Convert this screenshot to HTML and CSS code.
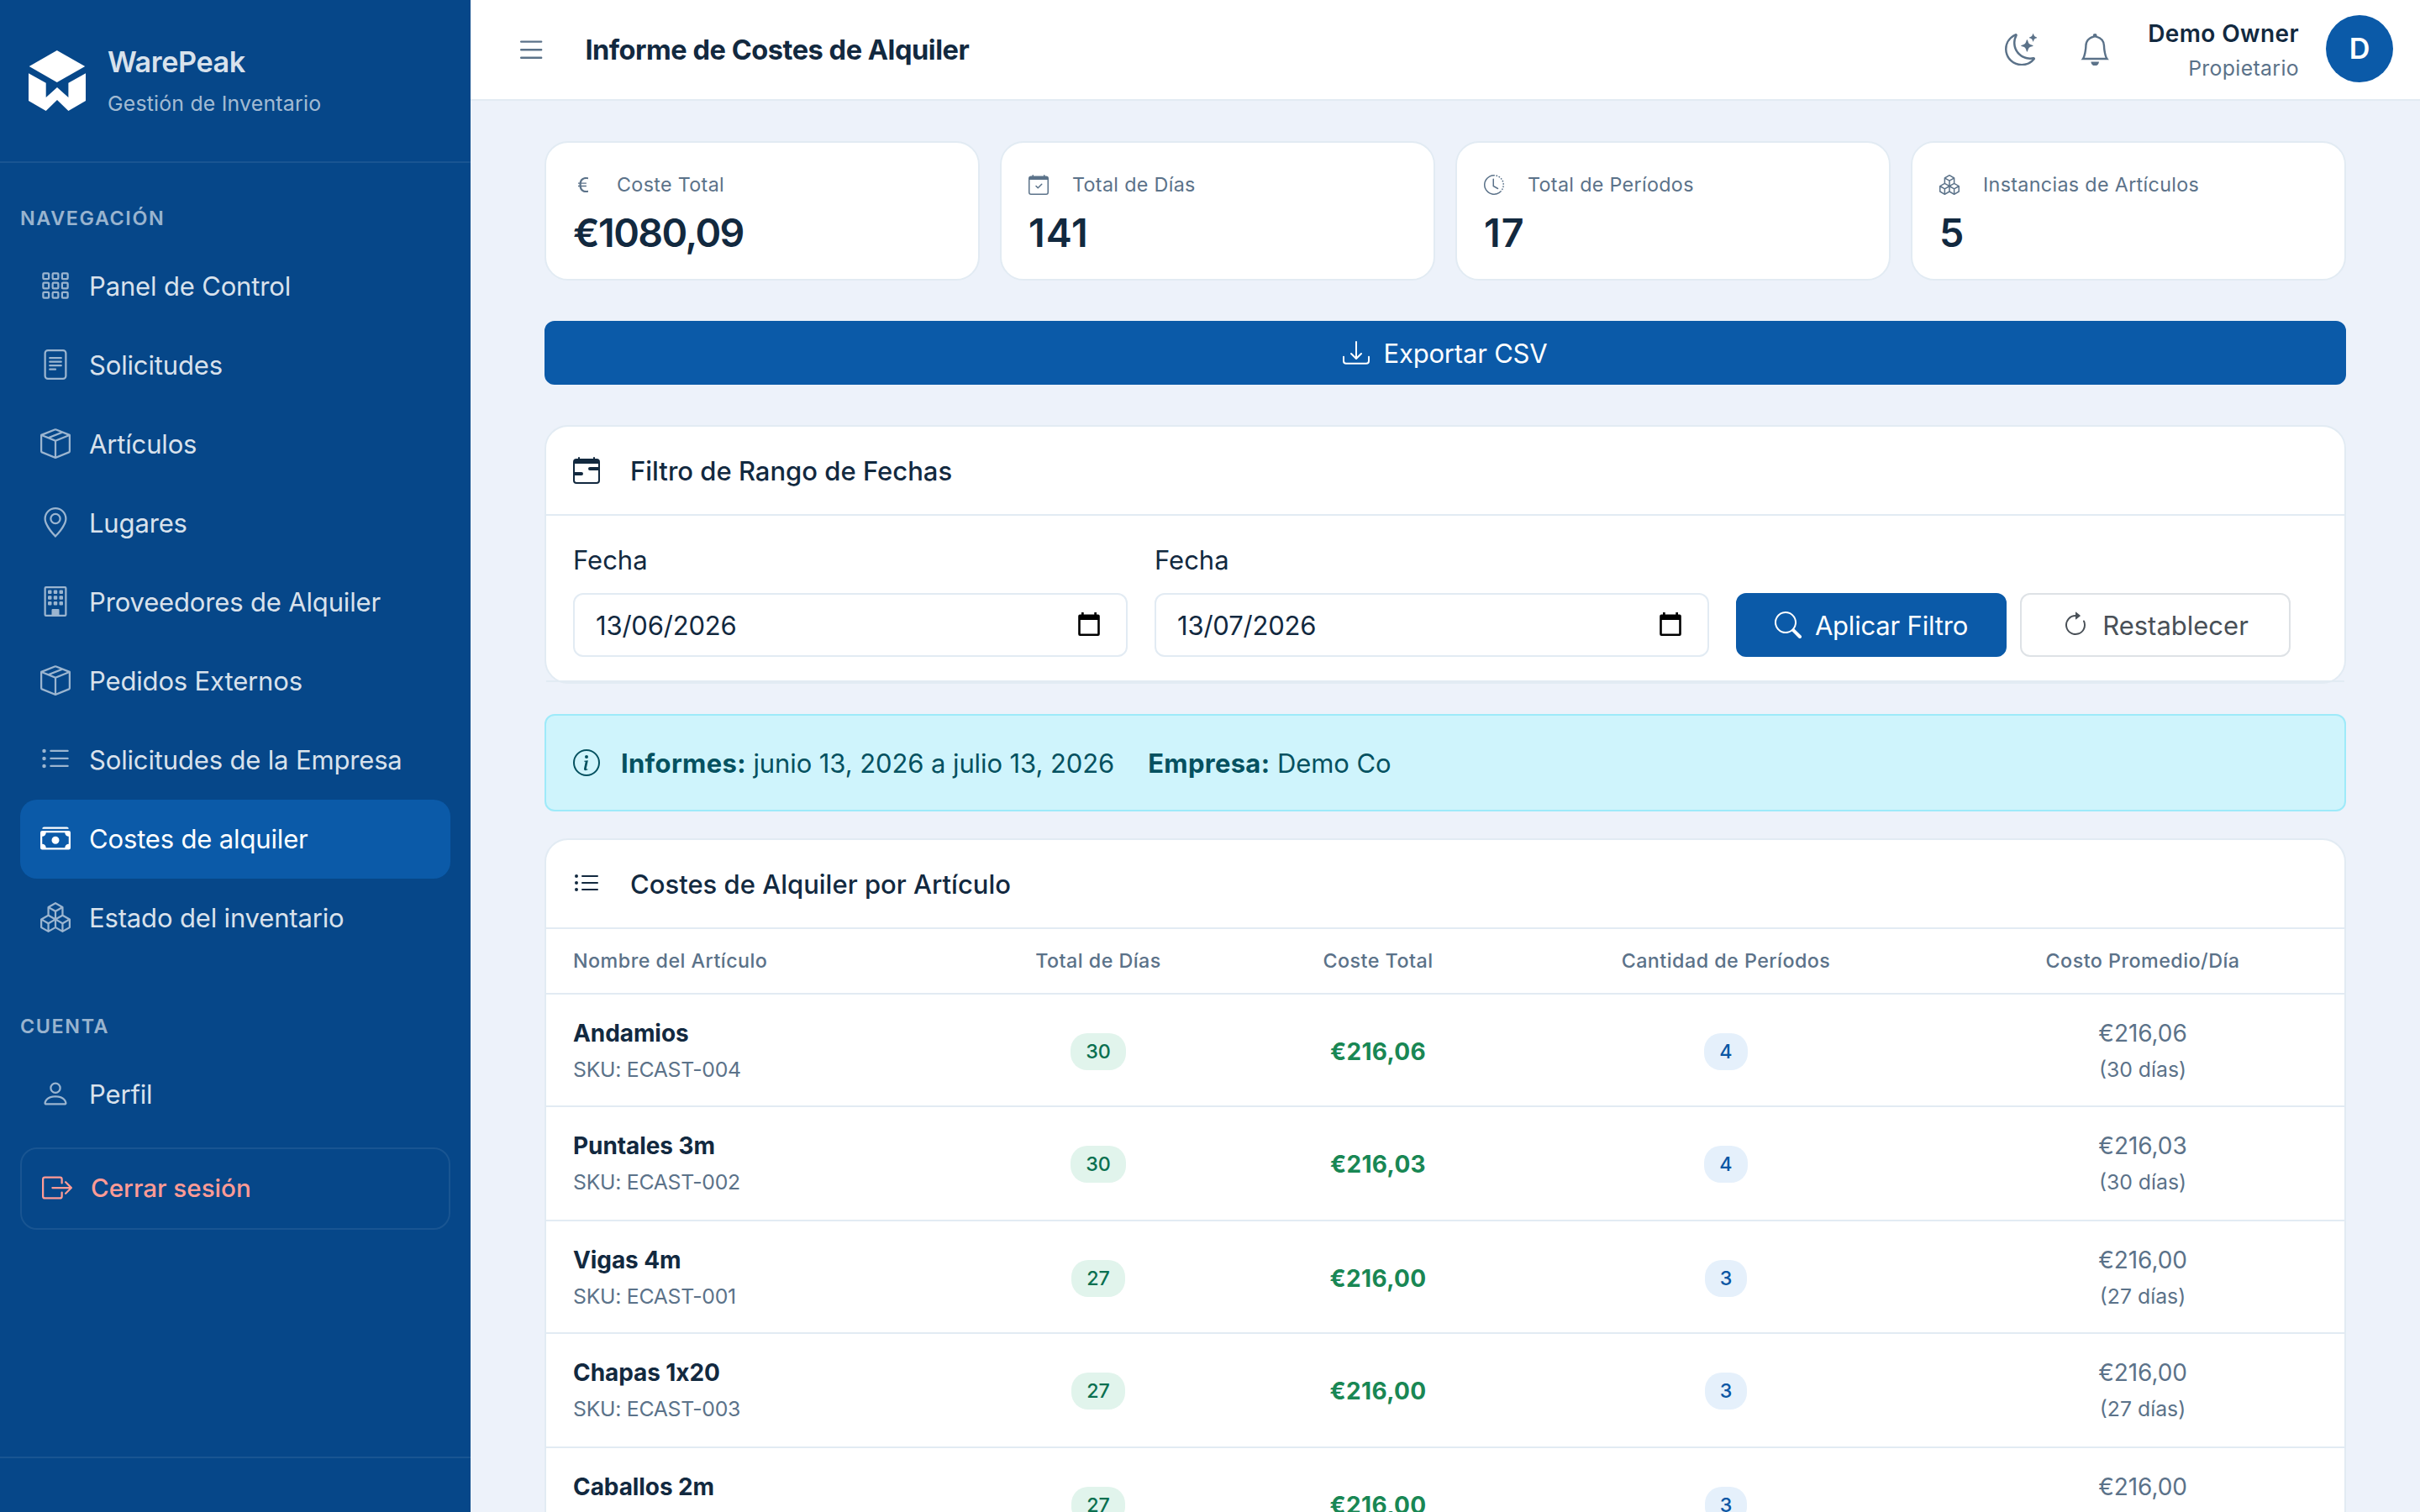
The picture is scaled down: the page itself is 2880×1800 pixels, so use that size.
FILE: index.html
```html
<!DOCTYPE html>
<html lang="es">
<head>
    <meta charset="utf-8">
    <title>Informe de Costes de Alquiler - WarePeak</title>
    <meta name="viewport" content="width=device-width, initial-scale=1.0">
    <link rel="stylesheet" href="styles.css">
</head>
<body>

<!-- Icon sprite -->
<svg class="sprite" aria-hidden="true">
    <symbol id="i-grid" viewBox="0 0 16 16">
        <g fill="none" stroke="currentColor">
            <rect x="1.5" y="1.5" width="3" height="3" rx=".5"/><rect x="6.5" y="1.5" width="3" height="3" rx=".5"/><rect x="11.5" y="1.5" width="3" height="3" rx=".5"/>
            <rect x="1.5" y="6.5" width="3" height="3" rx=".5"/><rect x="6.5" y="6.5" width="3" height="3" rx=".5"/><rect x="11.5" y="6.5" width="3" height="3" rx=".5"/>
            <rect x="1.5" y="11.5" width="3" height="3" rx=".5"/><rect x="6.5" y="11.5" width="3" height="3" rx=".5"/><rect x="11.5" y="11.5" width="3" height="3" rx=".5"/>
        </g>
    </symbol>
    <symbol id="i-file" viewBox="0 0 16 16">
        <path d="M5 4a.5.5 0 0 0 0 1h6a.5.5 0 0 0 0-1zm-.5 2.5A.5.5 0 0 1 5 6h6a.5.5 0 0 1 0 1H5a.5.5 0 0 1-.5-.5M5 8a.5.5 0 0 0 0 1h6a.5.5 0 0 0 0-1zm0 2a.5.5 0 0 0 0 1h3a.5.5 0 0 0 0-1z"/>
        <path d="M2 2a2 2 0 0 1 2-2h8a2 2 0 0 1 2 2v12a2 2 0 0 1-2 2H4a2 2 0 0 1-2-2zm10-1H4a1 1 0 0 0-1 1v12a1 1 0 0 0 1 1h8a1 1 0 0 0 1-1V2a1 1 0 0 0-1-1"/>
    </symbol>
    <symbol id="i-box" viewBox="0 0 16 16">
        <path d="M8.186 1.113a.5.5 0 0 0-.372 0L1.846 3.5l2.404.961L10.404 2zm3.564 1.426L5.596 5 8 5.961 14.154 3.5zm3.25 1.7-6.5 2.6v7.922l6.5-2.6V4.24zM7.5 14.762V6.838L1 4.239v7.923zM7.443.184a1.5 1.5 0 0 1 1.114 0l7.129 2.852A.5.5 0 0 1 16 3.5v8.662a1 1 0 0 1-.629.928l-7.185 2.874a.5.5 0 0 1-.372 0L.63 13.09a1 1 0 0 1-.63-.928V3.5a.5.5 0 0 1 .314-.464z"/>
    </symbol>
    <symbol id="i-geo" viewBox="0 0 16 16">
        <path d="M12.166 8.94c-.524 1.062-1.234 2.12-1.96 3.07A32 32 0 0 1 8 14.58a32 32 0 0 1-2.206-2.57c-.726-.95-1.436-2.008-1.96-3.07C3.304 7.867 3 6.862 3 6a5 5 0 0 1 10 0c0 .862-.305 1.867-.834 2.94M8 16s6-5.686 6-10A6 6 0 0 0 2 6c0 4.314 6 10 6 10"/>
        <path d="M8 8a2 2 0 1 1 0-4 2 2 0 0 1 0 4m0 1a3 3 0 1 0 0-6 3 3 0 0 0 0 6"/>
    </symbol>
    <symbol id="i-building" viewBox="0 0 16 16">
        <rect x="4" y="2" width="2" height="2" rx=".5"/><rect x="7" y="2" width="2" height="2" rx=".5"/><rect x="10" y="2" width="2" height="2" rx=".5"/>
        <rect x="4" y="5" width="2" height="2" rx=".5"/><rect x="7" y="5" width="2" height="2" rx=".5"/><rect x="10" y="5" width="2" height="2" rx=".5"/>
        <rect x="4" y="8" width="2" height="2" rx=".5"/><rect x="7" y="8" width="2" height="2" rx=".5"/><rect x="10" y="8" width="2" height="2" rx=".5"/>
        <path d="M2 1a1 1 0 0 1 1-1h10a1 1 0 0 1 1 1v14a1 1 0 0 1-1 1H3a1 1 0 0 1-1-1zm11 0H3v14h3v-2.5a.5.5 0 0 1 .5-.5h3a.5.5 0 0 1 .5.5V15h3z"/>
    </symbol>
    <symbol id="i-list-ul" viewBox="0 0 16 16">
        <path d="M5 11.5a.5.5 0 0 1 .5-.5h9a.5.5 0 0 1 0 1h-9a.5.5 0 0 1-.5-.5m0-4a.5.5 0 0 1 .5-.5h9a.5.5 0 0 1 0 1h-9a.5.5 0 0 1-.5-.5m0-4a.5.5 0 0 1 .5-.5h9a.5.5 0 0 1 0 1h-9a.5.5 0 0 1-.5-.5m-3 1a1 1 0 1 0 0-2 1 1 0 0 0 0 2m0 4a1 1 0 1 0 0-2 1 1 0 0 0 0 2m0 4a1 1 0 1 0 0-2 1 1 0 0 0 0 2"/>
    </symbol>
    <symbol id="i-cash" viewBox="0 0 16 16">
        <path d="M1 3a1 1 0 0 1 1-1h12a1 1 0 0 1 1 1zm7 8a2 2 0 1 0 0-4 2 2 0 0 0 0 4"/>
        <path d="M0 5a1 1 0 0 1 1-1h14a1 1 0 0 1 1 1v8a1 1 0 0 1-1 1H1a1 1 0 0 1-1-1zm3 0a2 2 0 0 1-2 2v4a2 2 0 0 1 2 2h10a2 2 0 0 1 2-2V7a2 2 0 0 1-2-2z"/>
    </symbol>
    <symbol id="i-boxes" viewBox="0 0 16 16">
        <path d="M7.752.066a.5.5 0 0 1 .496 0l3.75 2.143a.5.5 0 0 1 .252.434v3.995l3.498 2A.5.5 0 0 1 16 9.07v4.286a.5.5 0 0 1-.252.434l-3.75 2.143a.5.5 0 0 1-.496 0l-3.502-2-3.502 2.001a.5.5 0 0 1-.496 0l-3.75-2.143A.5.5 0 0 1 0 13.357V9.071a.5.5 0 0 1 .252-.434L3.75 6.638V2.643a.5.5 0 0 1 .252-.434zM4.25 7.504 1.508 9.071l2.742 1.567 2.742-1.567zM7.5 9.933l-2.75 1.571v3.134l2.75-1.571zm1 3.134 2.75 1.571v-3.134L8.5 9.933zm.508-3.996 2.742 1.567 2.742-1.567-2.742-1.567zm2.242-2.433V3.504L8.5 5.076V8.21zM7.5 8.21V5.076L4.75 3.504v3.134zM5.258 2.643 8 4.21l2.742-1.567L8 1.076zM15 9.933l-2.75 1.571v3.134L15 13.067zM3.75 14.638v-3.134L1 9.933v3.134z"/>
    </symbol>
    <symbol id="i-person" viewBox="0 0 16 16">
        <path d="M8 8a3 3 0 1 0 0-6 3 3 0 0 0 0 6m2-3a2 2 0 1 1-4 0 2 2 0 0 1 4 0m4 8c0 1-1 1-1 1H3s-1 0-1-1 1-4 6-4 6 3 6 4m-1-.004c-.001-.246-.154-.986-.832-1.664C11.516 10.68 10.289 10 8 10s-3.516.68-4.168 1.332c-.678.678-.83 1.418-.832 1.664z"/>
    </symbol>
    <symbol id="i-logout" viewBox="0 0 16 16">
        <path d="M10 12.5a.5.5 0 0 1-.5.5h-8a.5.5 0 0 1-.5-.5v-9a.5.5 0 0 1 .5-.5h8a.5.5 0 0 1 .5.5v2a.5.5 0 0 0 1 0v-2A1.5 1.5 0 0 0 9.5 2h-8A1.5 1.5 0 0 0 0 3.5v9A1.5 1.5 0 0 0 1.5 14h8a1.5 1.5 0 0 0 1.5-1.5v-2a.5.5 0 0 0-1 0z"/>
        <path d="M15.854 8.354a.5.5 0 0 0 0-.708l-3-3a.5.5 0 0 0-.708.708L14.293 7.5H5.5a.5.5 0 0 0 0 1h8.793l-2.147 2.146a.5.5 0 0 0 .708.708z"/>
    </symbol>
    <symbol id="i-menu" viewBox="0 0 16 16">
        <path d="M2.5 12a.5.5 0 0 1 .5-.5h10a.5.5 0 0 1 0 1H3a.5.5 0 0 1-.5-.5m0-4a.5.5 0 0 1 .5-.5h10a.5.5 0 0 1 0 1H3a.5.5 0 0 1-.5-.5m0-4a.5.5 0 0 1 .5-.5h10a.5.5 0 0 1 0 1H3a.5.5 0 0 1-.5-.5"/>
    </symbol>
    <symbol id="i-moon" viewBox="0 0 16 16">
        <path d="M6 .278a.77.77 0 0 1 .08.858 7.2 7.2 0 0 0-.878 3.46c0 4.021 3.278 7.277 7.318 7.277q.792-.001 1.533-.16a.79.79 0 0 1 .81.316.73.73 0 0 1-.031.893A8.35 8.35 0 0 1 8.344 16C3.734 16 0 12.286 0 7.71 0 4.266 2.114 1.312 5.124.06A.75.75 0 0 1 6 .278M4.858 1.311A7.27 7.27 0 0 0 1.025 7.71c0 4.02 3.279 7.276 7.319 7.276a7.32 7.32 0 0 0 5.205-2.162q-.506.063-1.029.063c-4.61 0-8.343-3.714-8.343-8.29 0-1.167.242-2.278.681-3.286"/>
        <path d="M10.794 3.148a.217.217 0 0 1 .412 0l.387 1.162c.173.518.579.924 1.097 1.097l1.162.387a.217.217 0 0 1 0 .412l-1.162.387a1.73 1.73 0 0 0-1.097 1.097l-.387 1.162a.217.217 0 0 1-.412 0l-.387-1.162A1.73 1.73 0 0 0 9.31 6.593l-1.162-.387a.217.217 0 0 1 0-.412l1.162-.387a1.73 1.73 0 0 0 1.097-1.097zM13.863.099a.145.145 0 0 1 .274 0l.258.774c.115.346.386.617.732.732l.774.258a.145.145 0 0 1 0 .274l-.774.258a1.16 1.16 0 0 0-.732.732l-.258.774a.145.145 0 0 1-.274 0l-.258-.774a1.16 1.16 0 0 0-.732-.732l-.774-.258a.145.145 0 0 1 0-.274l.774-.258c.346-.115.617-.386.732-.732z"/>
    </symbol>
    <symbol id="i-bell" viewBox="0 0 16 16">
        <path d="M8 16a2 2 0 0 0 2-2H6a2 2 0 0 0 2 2M8 1.918l-.797.161A4 4 0 0 0 4 6c0 .628-.134 2.197-.459 3.742-.16.767-.376 1.566-.663 2.258h10.244c-.287-.692-.502-1.49-.663-2.258C12.134 8.197 12 6.628 12 6a4 4 0 0 0-3.203-3.92zM14.22 12c.223.447.481.801.78 1H1c.299-.199.557-.553.78-1C2.68 10.2 3 6.88 3 6c0-2.42 1.72-4.44 4.005-4.901a1 1 0 1 1 1.99 0A5 5 0 0 1 13 6c0 .88.32 4.2 1.22 6"/>
    </symbol>
    <symbol id="i-euro" viewBox="0 0 16 16">
        <path d="M4 9.42h1.063C5.4 12.323 7.317 14 10.34 14c.622 0 1.167-.068 1.659-.185v-1.3c-.484.119-1.045.17-1.659.17-2.1 0-3.455-1.198-3.775-3.264h4.017v-.928H6.497v-.936q-.002-.165.008-.329h4.078v-.927H6.618c.388-1.898 1.719-2.985 3.723-2.985.614 0 1.175.05 1.659.177V2.194A6.6 6.6 0 0 0 10.341 2c-2.928 0-4.82 1.569-5.244 4.3H4v.928h1.01v1.265H4v.928z"/>
    </symbol>
    <symbol id="i-cal-check" viewBox="0 0 16 16">
        <path d="M10.854 7.146a.5.5 0 0 1 0 .708l-3 3a.5.5 0 0 1-.708 0l-1.5-1.5a.5.5 0 1 1 .708-.708L7.5 9.793l2.646-2.647a.5.5 0 0 1 .708 0"/>
        <path d="M3.5 0a.5.5 0 0 1 .5.5V1h8V.5a.5.5 0 0 1 1 0V1h1a2 2 0 0 1 2 2v11a2 2 0 0 1-2 2H2a2 2 0 0 1-2-2V3a2 2 0 0 1 2-2h1V.5a.5.5 0 0 1 .5-.5M1 4v10a1 1 0 0 0 1 1h12a1 1 0 0 0 1-1V4z"/>
    </symbol>
    <symbol id="i-cal-range" viewBox="0 0 16 16">
        <path d="M9 7a1 1 0 0 1 1-1h5v2h-5a1 1 0 0 1-1-1M1 9h4a1 1 0 0 1 0 2H1z"/>
        <path d="M3.5 0a.5.5 0 0 1 .5.5V1h8V.5a.5.5 0 0 1 1 0V1h1a2 2 0 0 1 2 2v11a2 2 0 0 1-2 2H2a2 2 0 0 1-2-2V3a2 2 0 0 1 2-2h1V.5a.5.5 0 0 1 .5-.5M1 4v10a1 1 0 0 0 1 1h12a1 1 0 0 0 1-1V4z"/>
    </symbol>
    <symbol id="i-clock" viewBox="0 0 16 16">
        <path d="M8.515 1.019A7 7 0 0 0 8 1V0a8 8 0 0 1 .589.022zm2.004.45a7 7 0 0 0-.985-.299l.219-.976q.576.129 1.126.342zm1.37.71a7 7 0 0 0-.439-.27l.493-.87a8 8 0 0 1 .979.654l-.615.789a7 7 0 0 0-.418-.302zm1.834 1.79a7 7 0 0 0-.653-.796l.724-.69q.406.429.747.91zm.744 1.352a7 7 0 0 0-.214-.468l.893-.45a8 8 0 0 1 .45 1.088l-.95.313a7 7 0 0 0-.179-.483m.53 2.507a7 7 0 0 0-.1-1.025l.985-.17q.1.58.116 1.17zm-.131 1.538q.05-.254.081-.51l.993.123a8 8 0 0 1-.23 1.155l-.964-.267q.069-.247.12-.501m-.952 2.379q.276-.436.486-.908l.914.405q-.24.54-.555 1.038zm-.964 1.205q.183-.183.35-.378l.758.653a8 8 0 0 1-.401.432z"/>
        <path d="M8 1a7 7 0 1 0 4.95 11.95l.707.707A8.001 8.001 0 1 1 8 0z"/>
        <path d="M7.5 3a.5.5 0 0 1 .5.5v5.21l3.248 1.856a.5.5 0 0 1-.496.868l-3.5-2A.5.5 0 0 1 7 9V3.500a.5.5 0 0 1 .5-.5"/>
    </symbol>
    <symbol id="i-download" viewBox="0 0 16 16">
        <path d="M.5 9.9a.5.5 0 0 1 .5.5v2.500a1 1 0 0 0 1 1h12a1 1 0 0 0 1-1v-2.500a.5.5 0 0 1 1 0v2.500a2 2 0 0 1-2 2H2a2 2 0 0 1-2-2v-2.500a.5.5 0 0 1 .5-.5"/>
        <path d="M7.646 11.854a.5.5 0 0 0 .708 0l3-3a.5.5 0 0 0-.708-.708L8.5 10.293V1.500a.5.5 0 0 0-1 0v8.793L5.354 8.146a.5.5 0 1 0-.708.708z"/>
    </symbol>
    <symbol id="i-search" viewBox="0 0 16 16">
        <path d="M11.742 10.344a6.5 6.5 0 1 0-1.397 1.398h-.001q.044.06.098.115l3.85 3.85a1 1 0 0 0 1.415-1.414l-3.85-3.85a1 1 0 0 0-.115-.1zM12 6.5a5.5 5.5 0 1 1-11 0 5.5 5.5 0 0 1 11 0"/>
    </symbol>
    <symbol id="i-reset" viewBox="0 0 16 16">
        <path d="M8 3a5 5 0 1 0 4.546 2.914.5.5 0 0 1 .908-.417A6 6 0 1 1 8 2z"/>
        <path d="M8 4.466V.534a.25.25 0 0 1 .41-.192l2.36 1.966c.12.1.12.284 0 .384L8.41 4.658A.25.25 0 0 1 8 4.466"/>
    </symbol>
    <symbol id="i-info" viewBox="0 0 16 16">
        <path d="M8 15A7 7 0 1 1 8 1a7 7 0 0 1 0 14m0 1A8 8 0 1 0 8 0a8 8 0 0 0 0 16"/>
        <path d="m8.93 6.588-2.29.287-.082.38.45.083c.294.07.352.176.288.469l-.738 3.468c-.194.897.105 1.319.808 1.319.545 0 1.178-.252 1.465-.598l.088-.416c-.2.176-.492.246-.686.246-.275 0-.375-.193-.304-.533zM9 4.500a1 1 0 1 1-2 0 1 1 0 0 1 2 0"/>
    </symbol>
    <symbol id="i-picker" viewBox="0 0 26 28">
        <path fill-rule="evenodd" d="M4 0h2.700v2.400h12.600V0H22v2.400h1.800a2 2 0 0 1 2 2V26a2 2 0 0 1-2 2H2.200a2 2 0 0 1-2-2V4.400a2 2 0 0 1 2-2H4zM2.800 9v16.400h20.400V9z"/>
    </symbol>
</svg>

<div class="app">
    <aside class="sidebar">
        <div class="brand">
            <svg class="brand-logo" viewBox="0 0 68 72">
                <path d="M33.800 0 67.200 19 33.800 38 .7 19z"/>
                <path d="M0 27.300 20.700 38.700V56L34 44l13.400 12V38.700L68 27.300V60L47.400 72 34 59 20.700 72 0 60z"/>
            </svg>
            <div>
                <div class="brand-name">WarePeak</div>
                <div class="brand-sub">Gestión de Inventario</div>
            </div>
        </div>

        <nav class="nav">
            <div class="nav-title">NAVEGACIÓN</div>
            <a class="nav-item"><svg class="icon"><use href="#i-grid"/></svg>Panel de Control</a>
            <a class="nav-item"><svg class="icon"><use href="#i-file"/></svg>Solicitudes</a>
            <a class="nav-item"><svg class="icon"><use href="#i-box"/></svg>Artículos</a>
            <a class="nav-item"><svg class="icon"><use href="#i-geo"/></svg>Lugares</a>
            <a class="nav-item"><svg class="icon"><use href="#i-building"/></svg>Proveedores de Alquiler</a>
            <a class="nav-item"><svg class="icon"><use href="#i-box"/></svg>Pedidos Externos</a>
            <a class="nav-item"><svg class="icon"><use href="#i-list-ul"/></svg>Solicitudes de la Empresa</a>
            <a class="nav-item active"><svg class="icon"><use href="#i-cash"/></svg>Costes de alquiler</a>
            <a class="nav-item"><svg class="icon"><use href="#i-boxes"/></svg>Estado del inventario</a>
        </nav>

        <nav class="nav nav-account">
            <div class="nav-title">CUENTA</div>
            <a class="nav-item"><svg class="icon"><use href="#i-person"/></svg>Perfil</a>
            <a class="nav-item logout"><svg class="icon"><use href="#i-logout"/></svg>Cerrar sesión</a>
        </nav>

        <div class="sidebar-footer"></div>
    </aside>

    <div class="main">
        <header class="topbar">
            <svg class="topbar-icon"><use href="#i-menu"/></svg>
            <h1 class="page-title">Informe de Costes de Alquiler</h1>
            <svg class="topbar-icon theme-toggle"><use href="#i-moon"/></svg>
            <svg class="topbar-icon"><use href="#i-bell"/></svg>
            <div class="user">
                <div class="user-name">Demo Owner</div>
                <div class="user-role">Propietario</div>
            </div>
            <div class="avatar">D</div>
        </header>

        <main class="content">
            <section class="stats">
                <div class="stat">
                    <div class="stat-label"><svg><use href="#i-euro"/></svg>Coste Total</div>
                    <div class="stat-value">€1080,09</div>
                </div>
                <div class="stat">
                    <div class="stat-label"><svg><use href="#i-cal-check"/></svg>Total de Días</div>
                    <div class="stat-value stat-count">141</div>
                </div>
                <div class="stat">
                    <div class="stat-label"><svg><use href="#i-clock"/></svg>Total de Períodos</div>
                    <div class="stat-value stat-count">17</div>
                </div>
                <div class="stat">
                    <div class="stat-label"><svg><use href="#i-boxes"/></svg>Instancias de Artículos</div>
                    <div class="stat-value stat-count">5</div>
                </div>
            </section>

            <button type="button" class="btn btn-primary btn-export"><svg><use href="#i-download"/></svg>Exportar CSV</button>

            <section class="card filter-card">
                <h2 class="card-header"><svg><use href="#i-cal-range"/></svg>Filtro de Rango de Fechas</h2>
                <form class="filter">
                    <div>
                        <div class="field-label">Fecha</div>
                        <div class="field">13/06/2026<svg><use href="#i-picker"/></svg></div>
                    </div>
                    <div>
                        <div class="field-label">Fecha</div>
                        <div class="field">13/07/2026<svg><use href="#i-picker"/></svg></div>
                    </div>
                    <div class="filter-actions">
                        <button type="button" class="btn btn-primary"><svg><use href="#i-search"/></svg>Aplicar Filtro</button>
                        <button type="button" class="btn btn-outline"><svg><use href="#i-reset"/></svg>Restablecer</button>
                    </div>
                </form>
            </section>

            <div class="alert">
                <svg><use href="#i-info"/></svg>
                <span><strong>Informes:</strong> junio 13, 2026 a julio 13, 2026</span>
                <span class="alert-company"><strong>Empresa:</strong> Demo Co</span>
            </div>

            <section class="card">
                <h2 class="card-header"><svg><use href="#i-list-ul"/></svg>Costes de Alquiler por Artículo</h2>
                <table class="table">
                    <colgroup>
                        <col class="col-name"><col class="col-days"><col class="col-cost"><col class="col-periods"><col class="col-avg">
                    </colgroup>
                    <thead>
                        <tr>
                            <th>Nombre del Artículo</th>
                            <th>Total de Días</th>
                            <th>Coste Total</th>
                            <th>Cantidad de Períodos</th>
                            <th>Costo Promedio/Día</th>
                        </tr>
                    </thead>
                    <tbody>
                        <tr>
                            <td><div class="item-name">Andamios</div><div class="item-sub">SKU: ECAST-004</div></td>
                            <td><span class="badge badge-green">30</span></td>
                            <td class="cost">€216,06</td>
                            <td><span class="badge badge-blue">4</span></td>
                            <td><div class="avg">€216,06</div><div class="avg-days">(30 días)</div></td>
                        </tr>
                        <tr>
                            <td><div class="item-name">Puntales 3m</div><div class="item-sub">SKU: ECAST-002</div></td>
                            <td><span class="badge badge-green">30</span></td>
                            <td class="cost">€216,03</td>
                            <td><span class="badge badge-blue">4</span></td>
                            <td><div class="avg">€216,03</div><div class="avg-days">(30 días)</div></td>
                        </tr>
                        <tr>
                            <td><div class="item-name">Vigas 4m</div><div class="item-sub">SKU: ECAST-001</div></td>
                            <td><span class="badge badge-green">27</span></td>
                            <td class="cost">€216,00</td>
                            <td><span class="badge badge-blue">3</span></td>
                            <td><div class="avg">€216,00</div><div class="avg-days">(27 días)</div></td>
                        </tr>
                        <tr>
                            <td><div class="item-name">Chapas 1x20</div><div class="item-sub">SKU: ECAST-003</div></td>
                            <td><span class="badge badge-green">27</span></td>
                            <td class="cost">€216,00</td>
                            <td><span class="badge badge-blue">3</span></td>
                            <td><div class="avg">€216,00</div><div class="avg-days">(27 días)</div></td>
                        </tr>
                        <tr>
                            <td><div class="item-name">Caballos 2m</div><div class="item-sub">SKU: ECAST-005</div></td>
                            <td><span class="badge badge-green">27</span></td>
                            <td class="cost">€216,00</td>
                            <td><span class="badge badge-blue">3</span></td>
                            <td><div class="avg">€216,00</div><div class="avg-days">(27 días)</div></td>
                        </tr>
                    </tbody>
                </table>
            </section>
        </main>
    </div>
</div>
</body>
</html>
```
FILE: styles.css
```css
:root {
    --primary: #0b5aa8;
    --sidebar: #064789;
    --text: #12293f;
    --muted: #5b7289;
    --border: #e2ebf3;
    --page: #edf2fa;
}

* {
    box-sizing: border-box;
}

body {
    margin: 0;
    font-family: Inter, "Noto Sans", sans-serif;
    font-size: 31px;
    color: var(--text);
    background: var(--page);
}

svg {
    display: block;
    flex: none;
    fill: currentColor;
}

.sprite {
    display: none;
}

.app {
    display: flex;
    height: 1800px;
    overflow: hidden;
}

/* Sidebar */
.sidebar {
    display: flex;
    flex-direction: column;
    width: 560px;
    flex: none;
    background: var(--sidebar);
    color: rgba(255, 255, 255, .86);
}

.brand {
    display: flex;
    align-items: center;
    gap: 26px;
    height: 194px;
    padding-left: 34px;
    border-bottom: 2px solid rgba(255, 255, 255, .08);
}

.brand-logo {
    width: 68px;
    height: 72px;
    color: #fff;
}

.brand-name {
    font-size: 34.2px;
    font-weight: 600;
    line-height: 48px;
    letter-spacing: -.012em;
    margin-bottom: 6px;
}

.brand-sub {
    font-size: 24.8px;
    line-height: 38px;
    letter-spacing: .009em;
    color: rgba(255, 255, 255, .65);
}

.nav {
    padding: 0 24px;
}

.nav-account {
    margin-top: 16px;
}

.nav-title {
    padding: 48px 0 16px;
    font-size: 23.3px;
    font-weight: 600;
    line-height: 36px;
    letter-spacing: .07em;
    color: rgba(255, 255, 255, .6);
}

.nav-item {
    display: flex;
    align-items: center;
    gap: 22px;
    height: 94px;
    padding: 0 24px 2px;
    border-radius: 20px;
    letter-spacing: -.005em;
}

.nav-item .icon {
    width: 36px;
    height: 36px;
    color: rgba(255, 255, 255, .6);
}

.nav-item.active {
    background: var(--primary);
    color: #fff;
}

.nav-item.active .icon {
    color: #fff;
}

.nav-item.logout {
    height: 98px;
    margin-top: 16px;
    border: 2px solid rgba(255, 255, 255, .08);
    font-size: 29.6px;
    font-weight: 500;
    letter-spacing: 0;
    color: #ff9b95;
}

.nav-item.logout .icon {
    color: inherit;
}

.sidebar-footer {
    height: 66px;
    margin-top: auto;
    border-top: 2px solid rgba(255, 255, 255, .08);
}

/* Topbar */
.main {
    flex: 1;
    min-width: 0;
}

.topbar {
    display: flex;
    align-items: center;
    height: 120px;
    padding: 0 32px 0 53px;
    background: #fff;
    border-bottom: 2px solid var(--border);
}

.topbar-icon {
    width: 38.4px;
    height: 38.4px;
    color: var(--muted);
}

.page-title {
    margin: 0 0 1px 45px;
    font-size: 32.6px;
    font-weight: 700;
    letter-spacing: -.015em;
}

.theme-toggle {
    margin-left: auto;
    margin-right: 49.6px;
}

.user {
    margin: 2px 32px 0 44px;
    text-align: right;
}

.user-name {
    font-size: 28px;
    font-weight: 600;
    line-height: 43px;
    letter-spacing: .014em;
}

.user-role {
    font-size: 24.8px;
    line-height: 39px;
    letter-spacing: .014em;
    color: var(--muted);
}

.avatar {
    width: 80px;
    height: 80px;
    margin-bottom: 2px;
    border-radius: 50%;
    background: var(--primary);
    color: #fff;
    font-size: 34.2px;
    font-weight: 600;
    line-height: 80px;
    text-align: center;
}

/* Content */
.content {
    padding: 48px 88px;
}

.stats {
    display: grid;
    grid-template-columns: repeat(4, 1fr);
    gap: 24px;
    margin-bottom: 48px;
}

.stat {
    padding: 32px 32px 26px;
    background: #fff;
    border: 2px solid var(--border);
    border-radius: 28px;
}

.stat-label {
    display: flex;
    align-items: center;
    gap: 28px;
    margin-bottom: 10px;
    font-size: 23.3px;
    line-height: 36px;
    letter-spacing: .014em;
    color: var(--muted);
}

.stat-label svg {
    width: 24px;
    height: 24px;
}

.stat-value {
    font-size: 46.6px;
    font-weight: 600;
    line-height: 58px;
    letter-spacing: -.034em;
}

.stat-count {
    letter-spacing: .02em;
}

.btn {
    display: flex;
    align-items: center;
    justify-content: center;
    gap: 16px;
    height: 76px;
    padding: 0;
    border: 2px solid var(--primary);
    border-radius: 12px;
    font: inherit;
    letter-spacing: -.006em;
}

.btn svg {
    width: 32px;
    height: 32px;
}

.btn-primary {
    background: var(--primary);
    color: #fff;
}

.btn-outline {
    background: #fff;
    border-color: #dee2e6;
    color: #495057;
    letter-spacing: 0;
}

.btn-export {
    width: 100%;
    margin-bottom: 48px;
}

.card {
    background: #fff;
    border: 2px solid var(--border);
    border-radius: 28px;
}

.card-header {
    display: flex;
    align-items: center;
    gap: 36px;
    height: 106px;
    margin: 0;
    padding: 0 32px;
    border-bottom: 2px solid var(--border);
    font-size: 31px;
    font-weight: 500;
}

.card-header svg {
    width: 32px;
    height: 32px;
}

.filter-card {
    margin-bottom: 36px;
}

.filter {
    display: grid;
    grid-template-columns: repeat(3, 660px);
    gap: 32px;
    align-items: end;
    padding: 29px 32px 28px;
    border-bottom: 2px solid var(--border);
}

.field-label {
    margin-bottom: 15px;
    line-height: 48px;
}

.field {
    display: flex;
    align-items: center;
    justify-content: space-between;
    height: 76px;
    padding: 0 31px 0 25px;
    border: 2px solid var(--border);
    border-radius: 12px;
    letter-spacing: -.006em;
}

.field svg {
    width: 26px;
    height: 28px;
    margin-top: -2px;
    color: #000;
}

.filter-actions {
    display: grid;
    grid-template-columns: 1fr 1fr;
    gap: 16px;
}

.alert {
    display: flex;
    align-items: center;
    height: 116px;
    margin-bottom: 32px;
    padding: 0 32px;
    background: #cff4fc;
    border: 2px solid #9eeaf9;
    border-radius: 12px;
    color: #055160;
    letter-spacing: -.003em;
}

.alert svg {
    width: 32px;
    height: 32px;
    margin-right: 25px;
}

.alert strong {
    font-weight: 700;
    letter-spacing: .01em;
}

.alert-company {
    margin-left: 40px;
}

/* Table */
.table {
    width: 100%;
    table-layout: fixed;
    border-collapse: separate;
    border-spacing: 0;
}

.col-name { width: 482px; }
.col-days { width: 350px; }
.col-cost { width: 316px; }
.col-periods { width: 512px; }
.col-avg { width: 480px; }

.table th {
    height: 78px;
    padding: 0 0 2px;
    border-bottom: 2px solid var(--border);
    font-size: 23.3px;
    font-weight: 500;
    letter-spacing: .02em;
    color: var(--muted);
}

.table td {
    padding: 25px 0 22px;
    border-bottom: 2px solid var(--border);
    text-align: center;
}

.table tr:nth-child(even) td {
    padding-bottom: 24px;
}

.table th:first-child,
.table td:first-child {
    padding-left: 32px;
    text-align: left;
}

.item-name {
    font-size: 28px;
    font-weight: 700;
    line-height: 43px;
    letter-spacing: -.003em;
}

.item-sub {
    font-size: 24.8px;
    line-height: 42px;
    letter-spacing: -.011em;
    color: var(--muted);
}

.cost {
    font-size: 28px;
    font-weight: 700;
    letter-spacing: .012em;
    color: #198754;
}

.avg {
    font-size: 28px;
    line-height: 43px;
    letter-spacing: -.003em;
    color: var(--muted);
}

.avg-days {
    font-size: 24.8px;
    line-height: 42px;
    color: var(--muted);
}

.badge {
    display: inline-block;
    height: 44px;
    padding: 0 18px;
    border-radius: 20px;
    font-size: 23.3px;
    font-weight: 500;
    line-height: 44px;
    vertical-align: middle;
}

.badge-green {
    background: #e1f4ec;
    color: #0b7050;
}

.badge-blue {
    background: #e5f0fb;
    color: #0b57a4;
}
```
